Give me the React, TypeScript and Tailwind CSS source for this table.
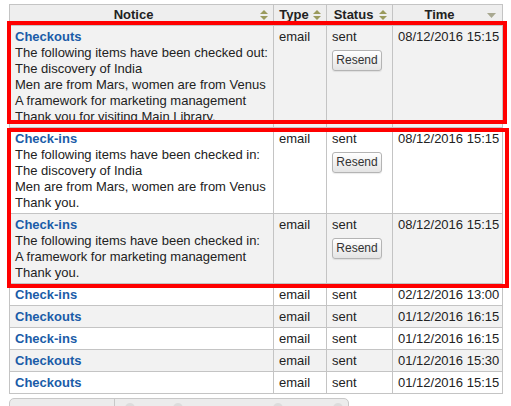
import React from "react";

type Row = {
  title: string;
  lines: string[];
  time: string;
  resend?: boolean;
};

const ROWS: Row[] = [
  {
    title: "Checkouts",
    lines: [
      "The following items have been checked out:",
      "The discovery of India",
      "Men are from Mars, women are from Venus",
      "A framework for marketing management",
      "Thank you for visiting Main Library.",
    ],
    time: "08/12/2016 15:15",
    resend: true,
  },
  {
    title: "Check-ins",
    lines: [
      "The following items have been checked in:",
      "The discovery of India",
      "Men are from Mars, women are from Venus",
      "Thank you.",
    ],
    time: "08/12/2016 15:15",
    resend: true,
  },
  {
    title: "Check-ins",
    lines: [
      "The following items have been checked in:",
      "A framework for marketing management",
      "Thank you.",
    ],
    time: "08/12/2016 15:15",
    resend: true,
  },
  { title: "Check-ins", lines: [], time: "02/12/2016 13:00" },
  { title: "Checkouts", lines: [], time: "01/12/2016 16:15" },
  { title: "Check-ins", lines: [], time: "01/12/2016 16:15" },
  { title: "Checkouts", lines: [], time: "01/12/2016 15:30" },
  { title: "Checkouts", lines: [], time: "01/12/2016 15:15" },
];

function SortBoth() {
  return (
    <svg width="8" height="10" viewBox="0 0 8 10" className="absolute right-[5px] top-[5px]">
      <path d="M4 0 L8 4 L0 4 Z" fill="#9a9a5c" />
      <path d="M0 6 L8 6 L4 10 Z" fill="#9a9a5c" />
    </svg>
  );
}

function SortDesc() {
  return (
    <svg width="9" height="5" viewBox="0 0 9 5" className="absolute right-[6px] top-[8px]">
      <path d="M0 0 L9 0 L4.5 5 Z" fill="#a8a890" />
    </svg>
  );
}

export default function App() {
  const th = "relative border border-[#c4c4c4] h-[21px] p-0 text-center font-bold text-[13px] leading-[16px] text-[#222]";
  const td = "border border-[#c4c4c4] align-top px-[5px] pt-[3px] pb-[2px]";

  return (
    <div
      className="relative w-[511px] h-[406px] overflow-hidden bg-white text-[13px] leading-[16px] text-[#222]"
      style={{ fontFamily: '"Liberation Sans", Arial, sans-serif' }}
    >
      <div className="pt-[4px] pl-[9px]">
        <table className="table-fixed border-collapse w-[493px]">
          <colgroup>
            <col className="w-[264px]" />
            <col className="w-[53px]" />
            <col className="w-[66px]" />
            <col className="w-[110px]" />
          </colgroup>
          <thead>
            <tr className="bg-[#eeeeee]">
              <th className={`${th} pr-[16px]`}>
                Notice
                <SortBoth />
              </th>
              <th className={`${th} pr-[12px]`}>
                Type
                <SortBoth />
              </th>
              <th className={`${th} pr-[12px]`}>
                Status
                <SortBoth />
              </th>
              <th className={`${th} pr-[16px]`}>
                Time
                <SortDesc />
              </th>
            </tr>
          </thead>
          <tbody>
            {ROWS.map((r, i) => (
              <tr key={i} className={i % 2 === 0 ? "bg-[#f2f2f2]" : "bg-white"}>
                <td className={td}>
                  <div className="font-bold text-[#1a5ca8]">{r.title}</div>
                  {r.lines.map((l, j) => (
                    <div key={j} className="whitespace-nowrap">{l}</div>
                  ))}
                </td>
                <td className={td}>email</td>
                <td className={td}>
                  <div>sent</div>
                  {r.resend && (
                    <button className="mt-[5px] w-[50px] h-[21px] rounded-[3px] border border-[#b4b4b4] bg-gradient-to-b from-white to-[#e4e4e4] text-[12px] leading-[19px] text-[#333] shadow-[0_1px_1px_rgba(0,0,0,0.08)]">
                      Resend
                    </button>
                  )}
                </td>
                <td className={`${td} whitespace-nowrap`}>{r.time}</td>
              </tr>
            ))}
          </tbody>
        </table>

        {/* pager bar, cut off at the bottom */}
        <div className="mt-[4px] flex w-[340px] h-[20px] rounded-t-[5px] border border-[#c8c8c8] bg-[#ececec] overflow-hidden">
          <div className="w-[105px] border-r border-[#c8c8c8]" />
          <div className="flex-1 flex items-start pt-[4px]">
            <span className="ml-[10px] w-[10px] h-[10px] rounded-full bg-[#dcdcdc]" />
            <span className="ml-[38px] w-[10px] h-[10px] rounded-full bg-[#dcdcdc]" />
            <span className="ml-[90px] w-[10px] h-[10px] rounded-full bg-[#dcdcdc]" />
            <span className="ml-[50px] w-[10px] h-[10px] rounded-full bg-[#dcdcdc]" />
          </div>
        </div>
      </div>

      {/* highlight boxes */}
      <div className="absolute left-[7px] top-[21px] w-[500px] h-[103px] border-4 border-[#ff0000] pointer-events-none" />
      <div className="absolute left-[7px] top-[128px] w-[502px] h-[160px] border-4 border-[#ff0000] pointer-events-none" />
    </div>
  );
}
